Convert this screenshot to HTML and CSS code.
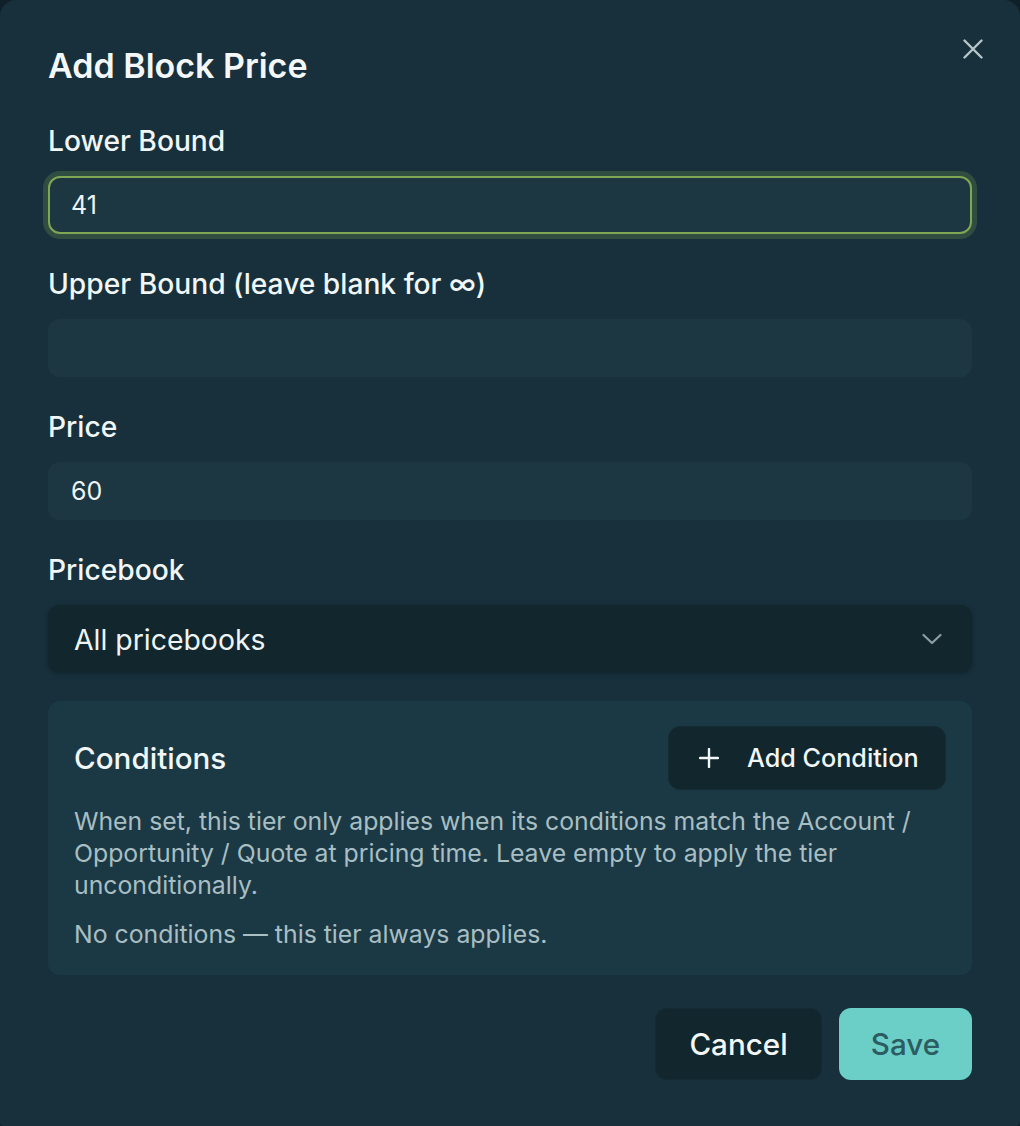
FILE: index.html
```html
<!DOCTYPE html>
<html lang="en">
<head>
<meta charset="utf-8">
<title>Add Block Price</title>
<link rel="stylesheet" href="styles.css">
</head>
<body>
<div class="dialog" role="dialog" aria-labelledby="dlg-title">
  <button class="close" type="button" aria-label="Close">
    <svg width="20" height="20" viewBox="0 0 20 20" aria-hidden="true"><path d="M1.5 1.5 L18.5 18.5 M18.5 1.5 L1.5 18.5" stroke="currentColor" stroke-width="2.4" stroke-linecap="round" fill="none"/></svg>
  </button>
  <h2 class="title" id="dlg-title">Add Block Price</h2>

  <div class="field">
    <label class="label" for="lower">Lower Bound</label>
    <input class="input input-focus" id="lower" type="text" value="41">
  </div>

  <div class="field">
    <label class="label" for="upper">Upper Bound (leave blank for ∞)</label>
    <input class="input" id="upper" type="text" value="">
  </div>

  <div class="field">
    <label class="label" for="price">Price</label>
    <input class="input" id="price" type="text" value="60">
  </div>

  <div class="field field-last">
    <div class="label">Pricebook</div>
    <div class="select">
      <span class="select-text">All pricebooks</span>
      <svg class="chevron" width="22" height="14" viewBox="0 0 22 14" aria-hidden="true"><path d="M2.5 3 L11 11 L19.5 3" stroke="currentColor" stroke-width="2.2" stroke-linecap="round" stroke-linejoin="round" fill="none"/></svg>
    </div>
  </div>

  <section class="conditions">
    <div class="cond-head">
      <h3 class="cond-title">Conditions</h3>
      <button class="btn-add" type="button">
        <svg class="plus" width="20" height="20" viewBox="0 0 20 20" aria-hidden="true"><path d="M10 1 V19 M1 10 H19" stroke="currentColor" stroke-width="2.4" stroke-linecap="round" fill="none"/></svg>
        <span>Add Condition</span>
      </button>
    </div>
    <p class="cond-desc">When set, this tier only applies when its conditions match the Account / Opportunity / Quote at pricing time. Leave empty to apply the tier unconditionally.</p>
    <p class="cond-empty">No conditions — this tier always applies.</p>
  </section>

  <div class="footer">
    <button class="btn btn-cancel" type="button">Cancel</button>
    <button class="btn btn-save" type="button">Save</button>
  </div>
</div>
</body>
</html>
```
FILE: styles.css
```css
html, body {
  margin: 0;
  padding: 0;
  background: #0f2029;
}
body {
  font-family: "Inter", "Noto Sans", sans-serif;
  color: #f1f6f6;
}
.dialog {
  position: relative;
  box-sizing: border-box;
  width: 1020px;
  height: 1126px;
  padding: 46px 48px 0;
  background: #17303c;
  border-radius: 16px 16px 4px 4px;
}
.close {
  position: absolute;
  top: 39px;
  right: 37px;
  width: 20px;
  height: 20px;
  padding: 0;
  border: 0;
  background: none;
  color: #b6c5c8;
  cursor: pointer;
}
.close svg { display: block; }
.title {
  margin: 0 0 38px;
  font-size: 34px;
  line-height: 40px;
  font-weight: 600;
  color: #f3f7f7;
}
.field {
  display: flex;
  flex-direction: column;
  margin-bottom: 33px;
}
.field-last { margin-bottom: 28px; }
.label {
  display: block;
  margin-bottom: 18px;
  font-size: 28.2px;
  line-height: 34px;
  font-weight: 500;
  color: #f1f6f6;
}
.input {
  box-sizing: border-box;
  width: 100%;
  height: 58px;
  margin: 0;
  padding: 0 21px;
  border: 2px solid transparent;
  border-radius: 12px;
  background: #1d3742;
  color: #eef4f4;
  font-family: inherit;
  font-size: 25px;
  outline: none;
}
.input-focus {
  border-color: #7fa653;
  box-shadow: 0 0 0 5px #2f4d40;
}
.select {
  box-sizing: border-box;
  height: 68px;
  display: flex;
  align-items: center;
  justify-content: space-between;
  padding: 0 29px 0 26px;
  background: #12262d;
  border-radius: 12px;
  box-shadow: 0 1px 4px rgba(0, 0, 0, 0.25);
}
.select-text {
  font-size: 28.4px;
  color: #eef4f4;
}
.chevron { color: #8c9fa3; display: block; }
.conditions {
  box-sizing: border-box;
  padding: 25px 26px 25px;
  background: #1b3945;
  border-radius: 12px;
}
.cond-head {
  display: flex;
  align-items: center;
  justify-content: space-between;
}
.cond-title {
  margin: 0;
  font-size: 29.6px;
  line-height: 36px;
  font-weight: 500;
  color: #f1f6f6;
}
.btn-add {
  box-sizing: border-box;
  display: flex;
  align-items: center;
  gap: 28px;
  width: 278px;
  height: 64px;
  padding: 0 0 0 30px;
  border: 1px solid #142b33;
  border-radius: 12px;
  background: #12262d;
  color: #f1f6f6;
  font-family: inherit;
  font-size: 25.2px;
  font-weight: 500;
  cursor: pointer;
}
.plus { display: block; flex: none; }
.cond-desc {
  margin: 15px 0 0;
  font-size: 24.8px;
  line-height: 32px;
  color: #a8bec2;
}
.cond-empty {
  margin: 17px 0 0;
  font-size: 24.8px;
  line-height: 32px;
  color: #a8bec2;
}
.footer {
  display: flex;
  justify-content: flex-end;
  gap: 17px;
  margin-top: 33px;
}
.btn {
  box-sizing: border-box;
  height: 72px;
  border-radius: 12px;
  font-family: inherit;
  font-size: 29.6px;
  font-weight: 500;
  cursor: pointer;
}
.btn-cancel {
  width: 167px;
  border: 1px solid #142a32;
  background: #12262d;
  color: #f3f7f7;
}
.btn-save {
  width: 133px;
  border: 0;
  background: #6bcfc7;
  color: #2c5b61;
}
```
